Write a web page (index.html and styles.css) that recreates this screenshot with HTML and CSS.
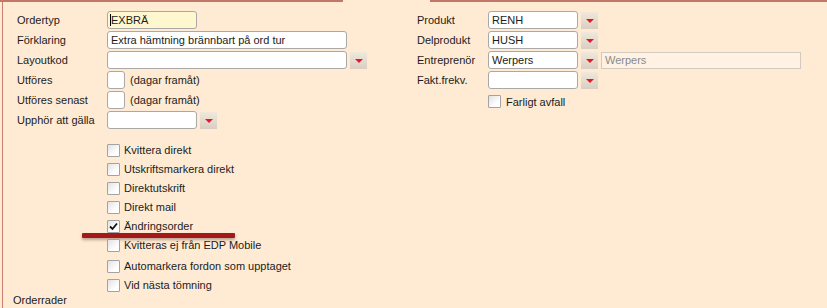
FILE: index.html
```html
<!DOCTYPE html>
<html lang="sv">
<head>
  <meta charset="UTF-8">
  <title>Order</title>
  <link rel="stylesheet" href="styles.css">
</head>
<body>
  <div class="edge"><span class="edge-a"></span><span class="edge-b"></span></div>
  <div class="panel">
    <div class="cols">
      <div class="col col-left">
        <div class="row"><span class="lbl">Ordertyp</span><div class="field w90 focus"><span class="caret"></span>EXBRÄ</div></div>
        <div class="row"><span class="lbl">Förklaring</span><div class="field w240">Extra hämtning brännbart på ord tur</div></div>
        <div class="row"><span class="lbl">Layoutkod</span><div class="field w240"></div><span class="drop"></span></div>
        <div class="row"><span class="lbl">Utföres</span><div class="field w18"></div><span class="hint">(dagar framåt)</span></div>
        <div class="row"><span class="lbl">Utföres senast</span><div class="field w18"></div><span class="hint">(dagar framåt)</span></div>
        <div class="row"><span class="lbl">Upphör att gälla</span><div class="field w90"></div><span class="drop"></span></div>

        <div class="checks">
          <div class="check"><span class="box"></span>Kvittera direkt</div>
          <div class="check"><span class="box"></span>Utskriftsmarkera direkt</div>
          <div class="check"><span class="box"></span>Direktutskrift</div>
          <div class="check"><span class="box"></span>Direkt mail</div>
          <div class="check">
            <span class="box on"><svg width="9" height="9" viewBox="0 0 9 9"><path d="M1 4.5 L3.5 7 L8 1.5" fill="none" stroke="#111" stroke-width="1.8"/></svg></span>Ändringsorder
            <span class="mark"></span>
          </div>
          <div class="check"><span class="box"></span>Kvitteras ej från EDP Mobile</div>
          <div class="check spaced"><span class="box"></span>Automarkera fordon som upptaget</div>
          <div class="check"><span class="box"></span>Vid nästa tömning</div>
        </div>
        <div class="section">Orderrader</div>
      </div>

      <div class="col col-right">
        <div class="row"><span class="lbl">Produkt</span><div class="field w90">RENH</div><span class="drop"></span></div>
        <div class="row"><span class="lbl">Delprodukt</span><div class="field w90">HUSH</div><span class="drop"></span></div>
        <div class="row"><span class="lbl">Entreprenör</span><div class="field w90">Werpers</div><span class="drop"></span><div class="ro">Werpers</div></div>
        <div class="row"><span class="lbl">Fakt.frekv.</span><div class="field w90"></div><span class="drop"></span></div>
        <div class="row row-check"><span class="lbl"></span><span class="box"></span><span class="gap">Farligt avfall</span></div>
      </div>
    </div>
  </div>
</body>
</html>
```

FILE: styles.css
```css
* { box-sizing: border-box; margin: 0; padding: 0; }
body {
  background: #ffebd3;
  font: 11px "Liberation Sans", Arial, sans-serif;
  color: #1c1c1c;
  height: 100vh;
  overflow: hidden;
}

.edge { display: flex; height: 2px; }
.edge-a { width: 343px; background: #c07868; }
.edge-b { flex: 1; margin-left: 87px; background: #c07868; }

.panel {
  margin-left: 2px;
  border-left: 1px solid #c98070;
  height: 306px;
  padding: 8px 0 0 14px;
}

.cols { display: flex; }
.col-left { width: 400px; }
.col { display: flex; flex-direction: column; }

.row { display: flex; align-items: center; height: 20px; white-space: nowrap; }
.lbl { width: 90px; flex: none; }
.col-right .lbl { width: 71px; }

.field {
  height: 18px;
  border: 1px solid #a9a9a9;
  border-radius: 3px;
  background: #fff;
  padding: 0 3px;
  display: flex;
  align-items: center;
  white-space: nowrap;
  overflow: hidden;
}
.w90 { width: 90px; }
.w240 { width: 240px; }
.w18 { width: 18px; }
.focus { background: #fff8cf; padding-left: 2px; }
.caret { width: 1px; height: 12px; background: #000; }

.drop {
  width: 17px;
  height: 17px;
  margin-left: 3px;
  background: linear-gradient(#f1e8dc, #d9cec1);
  display: flex;
  align-items: center;
  justify-content: center;
}
.drop::after {
  content: "";
  border-left: 4px solid transparent;
  border-right: 4px solid transparent;
  border-top: 4px solid #e01a26;
  margin-top: 1px;
}

.hint { margin-left: 5px; }

.ro {
  width: 200px;
  height: 17px;
  margin-left: 3px;
  border: 1px solid #d2c9bf;
  background: #fff2e3;
  color: #8a8a8a;
  padding-left: 3px;
  line-height: 15px;
}

.checks { margin-top: 10.5px; padding-left: 90px; }
.check {
  display: flex;
  align-items: center;
  height: 19px;
  position: relative;
  white-space: nowrap;
}
.check.spaced { margin-top: 2px; }
.box {
  width: 13px;
  height: 13px;
  flex: none;
  border: 1px solid #a3a3a3;
  border-radius: 1px;
  background: linear-gradient(135deg, #e2e2e2, #ffffff 70%);
  margin-right: 4px;
  display: flex;
  align-items: center;
  justify-content: center;
}
.row-check { padding-top: 3px; }
.row-check .gap { margin-left: 1px; }

.mark {
  position: absolute;
  left: -25px;
  top: 16px;
  width: 153px;
  height: 5px;
  background: #a31818;
  border-radius: 1px;
  box-shadow: 0 2px 3px rgba(60, 30, 20, 0.35);
}

.section { margin: -1px 0 0 -4px; line-height: 13px; }
```
